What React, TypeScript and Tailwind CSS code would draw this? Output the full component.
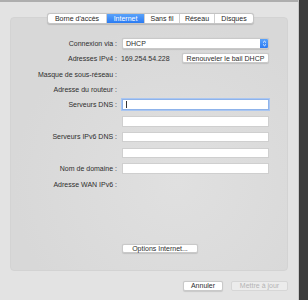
const tabs = [
  { label: "Borne d'accès", w: 'w-[58px]' },
  { label: 'Internet', w: 'w-[38px]', active: true },
  { label: 'Sans fil', w: 'w-[35px]' },
  { label: 'Réseau', w: 'w-[35px]' },
  { label: 'Disques', w: 'w-[39px]' },
];

function Row({
  label,
  className,
  children,
}: {
  label?: string;
  className: string;
  children?: React.ReactNode;
}) {
  return (
    <div className={`flex items-center ${className}`}>
      <div className="w-[107px] shrink-0 whitespace-nowrap pr-px text-right">{label}</div>
      <div className="ml-[4px] flex h-full w-[147px] items-center">{children}</div>
    </div>
  );
}

function Field({ focused }: { focused?: boolean }) {
  return (
    <div
      className={
        focused
          ? 'h-full w-full border border-[#8fb3ea] bg-white shadow-[0_0_0_1px_#a9c6f2]'
          : 'h-full w-full border border-[#cfcfcf] bg-white'
      }
    >
      {focused && <div className="ml-[3px] mt-[1.5px] h-[7px] w-px bg-[#333]" />}
    </div>
  );
}

export default function App() {
  return (
    <div className="flex h-[300px] w-[308px] overflow-hidden font-['Liberation_Sans',Arial,sans-serif] text-[7px] leading-none text-[#2e2e2e]">
      <div className="flex w-[298px] flex-col bg-[#e3e3e3]">
        <div className="h-[2px] bg-[#aeaeae]" />

        {/* tabs */}
        <div className="relative z-10 ml-[47px] mt-[11px] flex h-[11px] w-fit overflow-hidden rounded-[3px] border border-[#c4c4c4] bg-white shadow-[0_0.5px_1px_rgba(0,0,0,0.15)]">
          {tabs.map((t, i) => (
            <div
              key={t.label}
              className={`flex ${t.w} items-center justify-center ${i > 0 ? 'border-l border-[#cfcfcf]' : ''} ${
                t.active ? 'bg-gradient-to-b from-[#5aa2fa] to-[#2a7bf3] text-white' : 'text-[#262626]'
              }`}
            >
              {t.label}
            </div>
          ))}
        </div>

        {/* panel */}
        <div className="mx-[10px] -mt-[7px] flex h-[254px] flex-col rounded-[4px] border border-[#d3d3d3] bg-[radial-gradient(ellipse_at_60%_65%,#e0e0e0,#d8d8d8_70%)] pt-[20px]">
          <Row label="Connexion via :" className="h-[10.5px]">
            <div className="flex h-full w-full overflow-hidden rounded-[2px] border border-[#c9c9c9] bg-white shadow-[0_0.5px_1px_rgba(0,0,0,0.12)]">
              <div className="flex flex-1 items-center pl-[3px]">DHCP</div>
              <div className="flex w-[8px] flex-col items-center justify-center bg-gradient-to-b from-[#5aa2fa] to-[#2a7bf3]">
                <svg width="5" height="7" viewBox="0 0 5 7" fill="none" stroke="white" strokeWidth="0.9">
                  <path d="M1 2.6 L2.5 1.2 L4 2.6" />
                  <path d="M1 4.4 L2.5 5.8 L4 4.4" />
                </svg>
              </div>
            </div>
          </Row>

          <Row label="Adresses IPv4 :" className="mt-[4.5px] h-[10px]">
            <span className="-ml-px whitespace-nowrap">169.254.54.228</span>
            <div className="ml-auto flex h-full w-[87px] items-center justify-center whitespace-nowrap rounded-[2px] border border-[#c9c9c9] bg-white shadow-[0_0.5px_1px_rgba(0,0,0,0.12)]">
              Renouveler le bail DHCP
            </div>
          </Row>

          <Row label="Masque de sous-réseau :" className="mt-[6px] h-[10px]" />
          <Row label="Adresse du routeur :" className="mt-[5.5px] h-[10px]" />

          <Row label="Serveurs DNS :" className="mt-[4px] h-[11px]">
            <Field focused />
          </Row>
          <Row className="mt-[6px] h-[11px]">
            <Field />
          </Row>

          <Row label="Serveurs IPv6 DNS :" className="mt-[5px] h-[10.5px]">
            <Field />
          </Row>
          <Row className="mt-[5.5px] h-[10.5px]">
            <Field />
          </Row>

          <Row label="Nom de domaine :" className="mt-[5px] h-[10.5px]">
            <Field />
          </Row>

          <Row label="Adresse WAN IPv6 :" className="mt-[5.5px] h-[10px]" />

          <div className="ml-[111px] mt-[54.5px] flex h-[9.5px] w-[76px] items-center justify-center whitespace-nowrap rounded-[2px] border border-[#c9c9c9] bg-white shadow-[0_0.5px_1px_rgba(0,0,0,0.12)]">
            Options Internet...
          </div>
        </div>

        {/* footer */}
        <div className="mr-[10px] mt-[9.5px] flex justify-end gap-[8px]">
          <div className="flex h-[10px] w-[40px] items-center justify-center rounded-[2px] border border-[#c9c9c9] bg-white shadow-[0_0.5px_1px_rgba(0,0,0,0.12)]">
            Annuler
          </div>
          <div className="flex h-[10px] w-[57px] items-center justify-center rounded-[2px] border border-[#d6d6d6] bg-[#ececec] text-[#b4b4b4]">
            Mettre à jour
          </div>
        </div>
      </div>
      <div className="w-px bg-[#c9c9c9]" />
      <div className="flex-1 bg-[#3c3c3c]" />
    </div>
  );
}
